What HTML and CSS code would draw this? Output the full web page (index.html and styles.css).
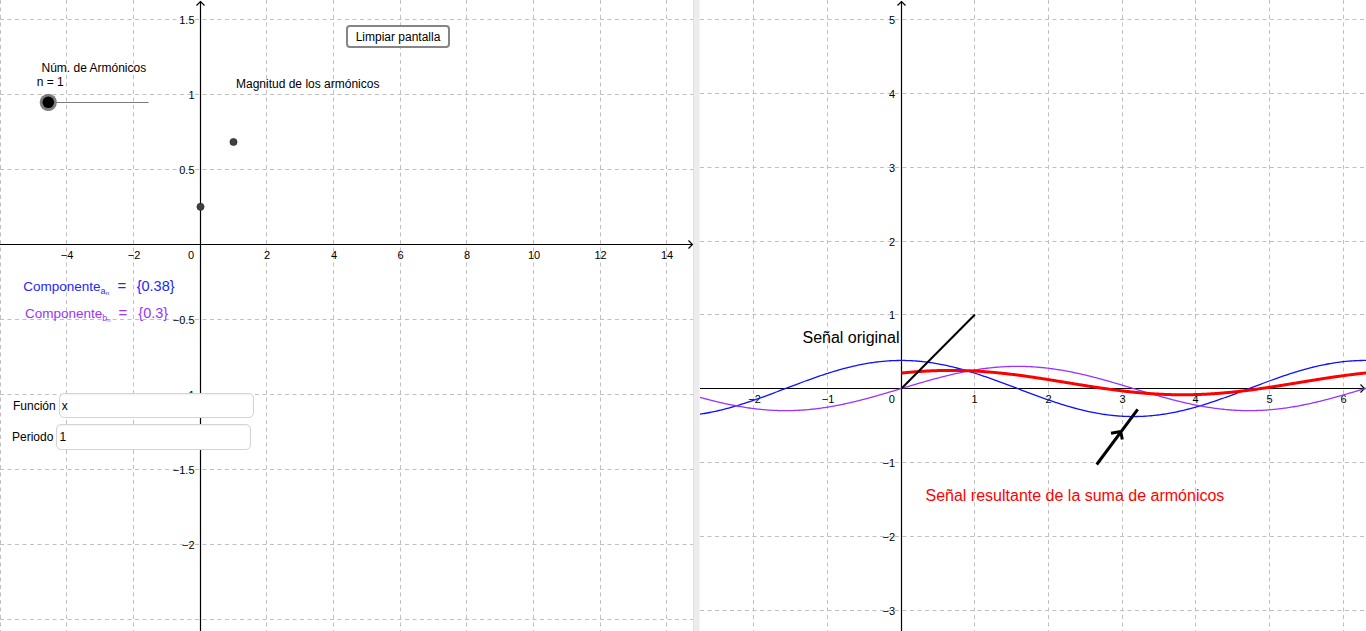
FILE: index.html
```html
<!DOCTYPE html>
<html lang="es">
<head>
<meta charset="utf-8">
<title>Series de Fourier</title>
<link rel="stylesheet" href="styles.css">
</head>
<body>
<div class="app">
  <section class="view view-left">
    <svg class="plot" width="693" height="631" viewBox="0 0 693 631">
      <path class="grid" d="M0.5 0V631M66.5 0V631M133.5 0V631M266.5 0V631M333.5 0V631M400.5 0V631M466.5 0V631M533.5 0V631M600.5 0V631M666.5 0V631M0 19.5H693M0 94.5H693M0 169.5H693M0 319.5H693M0 394.5H693M0 469.5H693M0 544.5H693M0 619.5H693"/>
      <path class="axis" d="M0 244.5H692.5M200.5 631V1.5"/>
      <path class="axis" d="M688.5 240.5L692.5 244.5L688.5 248.5M196.5 5.5L200.5 1.5L204.5 5.5"/>
      <g class="tick">
        <text x="67" y="259" text-anchor="middle">−4</text>
        <text x="134" y="259" text-anchor="middle">−2</text>
        <text x="191" y="259" text-anchor="middle">0</text>
        <text x="267" y="259" text-anchor="middle">2</text>
        <text x="334" y="259" text-anchor="middle">4</text>
        <text x="400.5" y="259" text-anchor="middle">6</text>
        <text x="467" y="259" text-anchor="middle">8</text>
        <text x="534" y="259" text-anchor="middle">10</text>
        <text x="600.5" y="259" text-anchor="middle">12</text>
        <text x="667" y="259" text-anchor="middle">14</text>
        <text x="194.5" y="23.5" text-anchor="end">1.5</text>
        <text x="194.5" y="98.5" text-anchor="end">1</text>
        <text x="194.5" y="173.5" text-anchor="end">0.5</text>
        <text x="194.5" y="323.5" text-anchor="end">−0.5</text>
        <text x="194.5" y="398.5" text-anchor="end">−1</text>
        <text x="194.5" y="473.5" text-anchor="end">−1.5</text>
        <text x="194.5" y="548.5" text-anchor="end">−2</text>
      </g>
      <text class="label" x="41.5" y="72.3">Núm. de Armónicos</text>
      <text class="label" x="36.7" y="86">n = 1</text>
      <text class="label" x="236" y="87.7">Magnitud de los armónicos</text>
      <line class="slider-line" x1="48" y1="102.5" x2="148.5" y2="102.5"/>
      <circle class="slider-halo" cx="48.3" cy="102.3" r="8.6"/>
      <circle class="slider-knob" cx="48.3" cy="102.3" r="5.8"/>
      <circle class="pt" cx="200.5" cy="206.8" r="3.6"/>
      <circle class="pt" cx="233.5" cy="142" r="3.6"/>
      <text class="formula formula-a" x="23.3" y="290.5">Componente<tspan class="sub" dy="3">a</tspan><tspan class="subsub" dy="1.5">n</tspan><tspan class="eq" x="117.5" y="290.5">=</tspan><tspan class="val" x="136.7" y="290.5">{0.38}</tspan></text>
      <text class="formula formula-b" x="25" y="317.5">Componente<tspan class="sub" dy="3">b</tspan><tspan class="subsub" dy="1.5">n</tspan><tspan class="eq" x="118.5" y="317.5">=</tspan><tspan class="val" x="138.3" y="317.5">{0.3}</tspan></text>
    </svg>
    <button class="btn-clear" type="button">Limpiar pantalla</button>
    <label class="field field-fn"><span>Función</span><input type="text" value="x"></label>
    <label class="field field-per"><span>Periodo</span><input type="text" value="1"></label>
  </section>
  <div class="divider"></div>
  <section class="view view-right">
    <svg class="plot" width="666" height="631" viewBox="0 0 666 631">
      <path class="grid" d="M53.5 0V631M127.5 0V631M274.5 0V631M348.5 0V631M422.5 0V631M495.5 0V631M569.5 0V631M643.5 0V631M0 19.5H666M0 93.5H666M0 167.5H666M0 241.5H666M0 314.5H666M0 462.5H666M0 536.5H666M0 610.5H666"/>
      <path class="axis" d="M0 388.5H664.5M201.5 631V1.5"/>
      <path class="axis" d="M660.5 384.5L664.5 388.5L660.5 392.5M197.5 5.5L201.5 1.5L205.5 5.5"/>
      <g class="tick">
        <text x="54.5" y="403" text-anchor="middle">−2</text>
        <text x="128" y="403" text-anchor="middle">−1</text>
        <text x="191.7" y="403" text-anchor="middle">0</text>
        <text x="274.5" y="403" text-anchor="middle">1</text>
        <text x="348.5" y="403" text-anchor="middle">2</text>
        <text x="422.5" y="403" text-anchor="middle">3</text>
        <text x="495.5" y="403" text-anchor="middle">4</text>
        <text x="569.5" y="403" text-anchor="middle">5</text>
        <text x="643.5" y="403" text-anchor="middle">6</text>
        <text x="195" y="23.5" text-anchor="end">5</text>
        <text x="195" y="97.5" text-anchor="end">4</text>
        <text x="195" y="171.5" text-anchor="end">3</text>
        <text x="195" y="245.5" text-anchor="end">2</text>
        <text x="195" y="319" text-anchor="end">1</text>
        <text x="195" y="466.5" text-anchor="end">−1</text>
        <text x="195" y="540.5" text-anchor="end">−2</text>
        <text x="195" y="614.5" text-anchor="end">−3</text>
      </g>
      <polyline id="curve-a" class="curve curve-a" points=""/>
      <polyline id="curve-b" class="curve curve-b" points=""/>
      <polyline id="curve-sum" class="curve curve-sum" points=""/>
      <line class="segment" x1="201.5" y1="388.5" x2="275" y2="314.5"/>
      <path class="pointer" d="M396.7 464.5L437.7 409.3M411 433.3L420.7 431.5L422.3 439.5"/>
      <text class="big" x="102.5" y="342.7">Señal original</text>
      <text class="big red" x="225.5" y="500.5">Señal resultante de la suma de armónicos</text>
    </svg>
  </section>
</div>
<script src="script.js"></script>
</body>
</html>
```

FILE: styles.css
```css
html, body {
  margin: 0;
  padding: 0;
  background: #ffffff;
  overflow: hidden;
}

.app {
  display: flex;
  width: 1366px;
  height: 631px;
  font-family: "Liberation Sans", Arial, sans-serif;
}

.view {
  position: relative;
  height: 631px;
  overflow: hidden;
  background: #ffffff;
}

.view-left {
  width: 693px;
  flex: none;
}

.view-right {
  width: 666px;
  flex: none;
}

.divider {
  width: 7px;
  flex: none;
  box-sizing: border-box;
  background: #ececec;
  border-left: 1px solid #e0e0e0;
  border-right: 1px solid #f3f3f3;
}

.plot {
  display: block;
}

.grid {
  fill: none;
  stroke: #c0c0c0;
  stroke-width: 1;
  stroke-dasharray: 4 3.5;
}

.axis {
  fill: none;
  stroke: #000000;
  stroke-width: 1.2;
}

.tick text,
.tick {
  font-family: "Liberation Sans", Arial, sans-serif;
  font-size: 11px;
  fill: #000000;
}

.label {
  font-family: "Liberation Sans", Arial, sans-serif;
  font-size: 12px;
  fill: #000000;
}

.slider-line {
  stroke: #7a7a7a;
  stroke-width: 1;
}

.slider-halo {
  fill: #7d7d7d;
}

.slider-knob {
  fill: #000000;
}

.pt {
  fill: #404040;
  stroke: #1e1e1e;
  stroke-width: 0.6;
}

.formula {
  font-family: "Liberation Sans", Arial, sans-serif;
  font-size: 13.5px;
}

.formula .sub {
  font-size: 9px;
}

.formula .subsub {
  font-size: 6px;
}

.formula .eq {
  font-size: 15px;
}

.formula .val {
  font-size: 14.5px;
}

.formula-a {
  fill: #2525ff;
}

.formula-b {
  fill: #9933ff;
}

.btn-clear {
  position: absolute;
  left: 346px;
  top: 25px;
  width: 104px;
  height: 23px;
  box-sizing: border-box;
  padding: 0;
  margin: 0;
  background: #ffffff;
  border: 2px solid #858585;
  border-radius: 4px;
  font-family: "Liberation Sans", Arial, sans-serif;
  font-size: 12px;
  color: #000000;
  line-height: 1;
}

.field {
  position: absolute;
  display: flex;
  align-items: center;
  gap: 3px;
  font-family: "Liberation Sans", Arial, sans-serif;
  font-size: 12px;
  color: #000000;
}

.field input {
  box-sizing: border-box;
  margin: 0;
  padding: 0 2px;
  border: 1px solid #d4d4d4;
  border-radius: 5px;
  background: #ffffff;
  box-shadow: inset 0 1px 2px rgba(0, 0, 0, 0.06);
  font-family: "Liberation Sans", Arial, sans-serif;
  font-size: 12px;
  color: #000000;
  outline: none;
}

.field-fn {
  left: 13px;
  top: 393px;
}

.field-fn input {
  width: 195px;
  height: 25px;
}

.field-per {
  left: 12px;
  top: 424px;
}

.field-per input {
  width: 195px;
  height: 26px;
}

.curve {
  fill: none;
  stroke-linejoin: round;
}

.curve-a {
  stroke: #1010ff;
  stroke-width: 1.3;
}

.curve-b {
  stroke: #9933ff;
  stroke-width: 1.3;
}

.curve-sum {
  stroke: #ff0000;
  stroke-width: 3;
}

.segment {
  stroke: #000000;
  stroke-width: 2;
}

.pointer {
  fill: none;
  stroke: #000000;
  stroke-width: 3;
}

.big {
  font-family: "Liberation Sans", Arial, sans-serif;
  font-size: 16px;
  fill: #000000;
}

.big.red {
  fill: #ff0000;
}
```

FILE: script.js
```js
(function () {
  var ox = 201.5, oy = 388.5, u = 73.8;
  function plot(id, f, a, b) {
    var el = document.getElementById(id);
    var pts = [];
    var n = 500;
    for (var i = 0; i <= n; i++) {
      var x = a + (b - a) * i / n;
      pts.push((ox + x * u).toFixed(2) + ',' + (oy - f(x) * u).toFixed(2));
    }
    el.setAttribute('points', pts.join(' '));
  }
  plot('curve-a', function (x) { return 0.38 * Math.cos(x); }, -2.8, 6.4);
  plot('curve-b', function (x) { return 0.3 * Math.sin(x); }, -2.8, 6.4);
  plot('curve-sum', function (x) { return 0.08 + 0.165 * Math.cos(x - 0.668); }, 0, 6.4);
})();
```
